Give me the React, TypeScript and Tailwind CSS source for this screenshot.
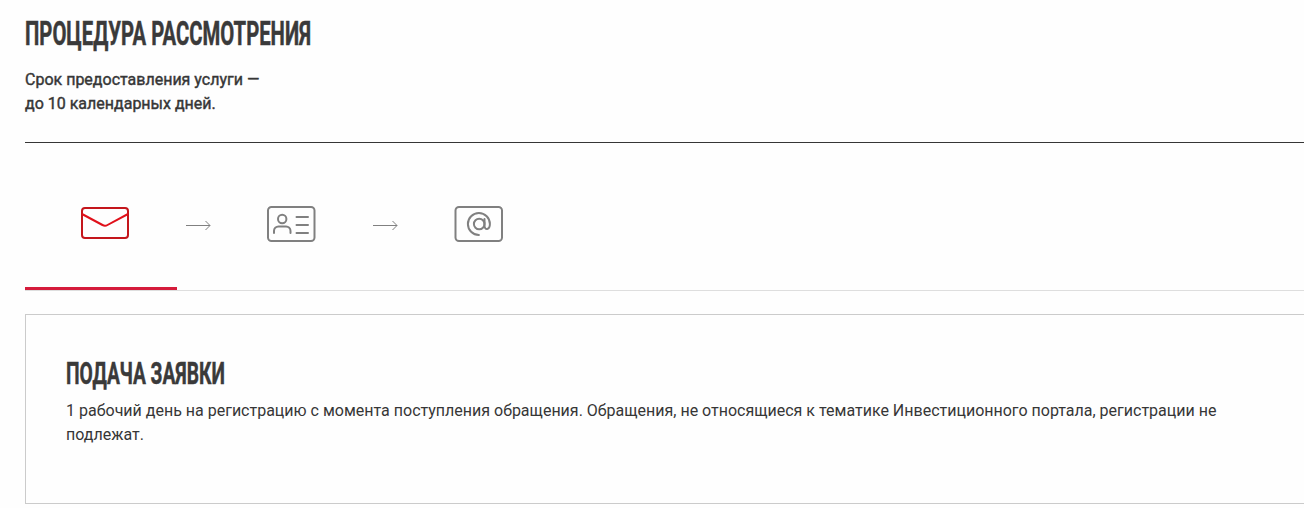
import type { ReactNode } from "react";

function Title({ children, className }: { children: ReactNode; className: string }) {
  return (
    <h2
      className={`w-max origin-left whitespace-nowrap leading-9 font-bold text-[#3a3a3a] uppercase [-webkit-text-stroke:0.5px_#3a3a3a] ${className}`}
    >
      {children}
    </h2>
  );
}

function Arrow() {
  return (
    <svg className="mt-0.5 h-3 w-[26px]" viewBox="0 0 26 12" fill="none" stroke="#808080" strokeWidth="1">
      <path d="M0 6.5H24M19.5 2l4.5 4.5L19.5 11" />
    </svg>
  );
}

function Mail() {
  return (
    <svg className="h-9 w-[50px]" viewBox="0 0 50 36" fill="none" strokeWidth="2" strokeLinejoin="round">
      <rect x="2" y="2" width="46" height="30" rx="3" stroke="#c4161c" />
      <path d="M2 8l20.5 11q2.5 1.4 5 0L48 8" stroke="#e0101a" />
    </svg>
  );
}

function Card() {
  return (
    <svg className="h-9 w-[50px]" viewBox="0 0 50 36" fill="none" stroke="#808080" strokeWidth="2" strokeLinecap="round">
      <rect x="1" y="1" width="46.5" height="34" rx="3.5" />
      <circle cx="15.2" cy="13" r="4.2" />
      <path d="M7 27v-2a4.5 4.5 0 0 1 4.5-4.5H19a4.5 4.5 0 0 1 4.5 4.5v2M29.5 11H41M29.5 19H41M29.5 27H41" />
    </svg>
  );
}

function AtSign() {
  return (
    <svg className="h-9 w-[50px]" viewBox="0 0 50 36" fill="none" stroke="#808080" strokeWidth="2" strokeLinecap="round">
      <rect x="1.5" y="1" width="46.5" height="34" rx="3.5" />
      <circle cx="25.2" cy="18" r="5.3" />
      <path d="M30.5 13v6.8c0 4.7 5.4 4.2 5.4-1.8a11 11 0 1 0-11 11" />
    </svg>
  );
}

export default function App() {
  return (
    <main className="flex h-[508px] w-full flex-col overflow-hidden bg-[#fefefe] pl-[25px] font-['Roboto','Liberation_Sans',sans-serif] text-[#363636]">
      <Title className="mt-4 scale-x-[0.618] text-[32.8px]">Процедура рассмотрения</Title>
      <p className="mt-4 text-base leading-6 [-webkit-text-stroke:0.4px_#363636]">
        Срок предоставления услуги —<br />
        до 10 календарных дней.
      </p>
      <hr className="mt-[26px] border-t border-[#363636]" />
      <nav className="flex h-[148px] items-start border-b border-[#dedede]">
        <div className="flex h-[147px] w-[152px] items-start border-b-3 border-[#d51c3b] pt-[63px] pl-[55px]">
          <Mail />
        </div>
        <div className="flex items-center pt-[63px] pl-[9px]">
          <Arrow />
          <div className="ml-[55px]"><Card /></div>
          <div className="ml-[56px] flex"><Arrow /></div>
          <div className="ml-[55px]"><AtSign /></div>
        </div>
      </nav>
      <section className="mt-[23px] h-[190px] border border-r-0 border-[#cbcbcb] pt-[41px] pl-10">
        <Title className="scale-x-[0.616] text-[31.2px]">Подача заявки</Title>
        <p className="mt-[7px] w-[1180px] text-base leading-6">
          1 рабочий день на регистрацию с момента поступления обращения. Обращения, не относящиеся к тематике Инвестиционного портала, регистрации не подлежат.
        </p>
      </section>
    </main>
  );
}
